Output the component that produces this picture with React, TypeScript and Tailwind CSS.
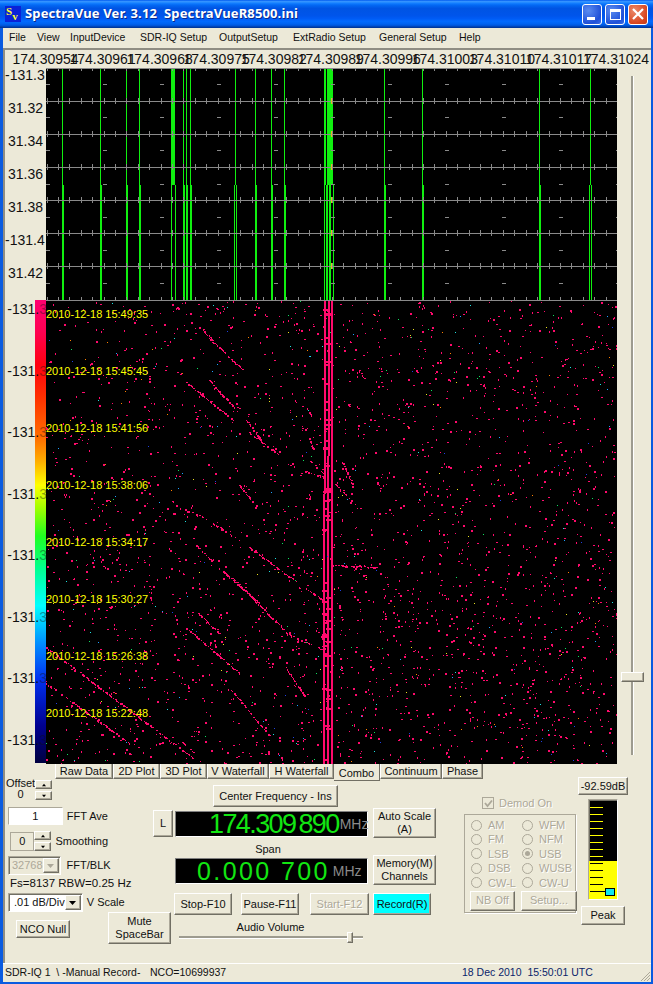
import React from "react";

// seeded random so the waterfall stays the same on each load
function makeRandom(seed: number) {
  let a = seed;
  return () => {
    a |= 0;
    a = (a + 0x6d2b79f5) | 0;
    let t = Math.imul(a ^ (a >>> 15), 1 | a);
    t = (t + Math.imul(t ^ (t >>> 7), 61 | t)) ^ t;
    return ((t ^ (t >>> 14)) >>> 0) / 4294967296;
  };
}

const bevel =
  "border border-t-white border-l-white border-b-[#716f64] border-r-[#716f64] shadow-[inset_-1px_-1px_0_#aca899] bg-[#ece9d8]";
const sunken =
  "border border-t-[#aca899] border-l-[#aca899] border-b-white border-r-white shadow-[inset_1px_1px_0_#716f64]";
const disabledText = "text-[#aca899] [text-shadow:1px_1px_0_#fff]";

const menuItems = [
  { label: "File", w: "w-[28px]" },
  { label: "View", w: "w-[33px]" },
  { label: "InputDevice", w: "w-[70px]" },
  { label: "SDR-IQ Setup", w: "w-[79px]" },
  { label: "OutputSetup", w: "w-[74px]" },
  { label: "ExtRadio Setup", w: "w-[86px]" },
  { label: "General Setup", w: "w-[80px]" },
  { label: "Help", w: "w-[30px]" },
];

const freqLabels = [
  "174.30954", "174.30961", "174.30968", "174.30975", "174.30982", "174.30989",
  "174.30996", "174.31003", "174.31010", "174.31017", "174.31024",
];
const plotLabels = ["-131.3", "31.32", "31.34", "31.36", "31.38", "-131.4", "31.42"];
const stamps = [
  "2010-12-18 15:49:35", "2010-12-18 15:45:45", "2010-12-18 15:41:56", "2010-12-18 15:38:06",
  "2010-12-18 15:34:17", "2010-12-18 15:30:27", "2010-12-18 15:26:38", "2010-12-18 15:22:48",
];

const tabs = [
  { label: "Raw Data", w: "w-[58px]" },
  { label: "2D Plot", w: "w-[47px]" },
  { label: "3D Plot", w: "w-[47px]" },
  { label: "V Waterfall", w: "w-[62px]" },
  { label: "H Waterfall", w: "w-[65px]" },
  { label: "Combo", w: "w-[46px]", active: true },
  { label: "Continuum", w: "w-[62px]" },
  { label: "Phase", w: "w-[41px]" },
];

function Button({ className = "", disabled = false, children }: { className?: string; disabled?: boolean; children: React.ReactNode }) {
  return (
    <div className={`${bevel} flex flex-col items-center justify-center shrink-0 leading-[13px] text-center whitespace-nowrap ${disabled ? disabledText : ""} ${className}`}>
      {children}
    </div>
  );
}

function Tri({ up = false, color = "#000", size = 7 }: { up?: boolean; color?: string; size?: number }) {
  return (
    <svg width={size} height={4} viewBox="0 0 7 4">
      <path d={up ? "M3.5 0 L7 4 L0 4 Z" : "M0 0 L7 0 L3.5 4 Z"} fill={color} />
    </svg>
  );
}

function Spin() {
  return (
    <div className="flex flex-col gap-[2px]">
      <div className={`${bevel} w-[17px] h-[9px] flex items-center justify-center`}><Tri up size={4} /></div>
      <div className={`${bevel} w-[17px] h-[9px] flex items-center justify-center`}><Tri size={4} /></div>
    </div>
  );
}

function TitleBar() {
  return (
    <div className="h-[28px] shrink-0 flex items-center pl-[5px] pr-[5px] bg-[linear-gradient(180deg,#0058ee_0%,#3593ff_5%,#288eff_8%,#127dff_12%,#0369f4_18%,#0054e3_30%,#0055eb_56%,#005bf5_66%,#026afe_76%,#0062ef_86%,#0052d6_92%,#0040ab_96%,#003092_100%)]">
      <div className="w-[16px] h-[16px] bg-[#0a22d8] flex shrink-0 font-['Liberation_Serif',serif] font-bold text-[#ffff30] text-[11px] leading-[11px] pl-[1px]">
        <span>S</span>
        <span className="mt-[5px]">v</span>
      </div>
      <div className="ml-[4px] text-white font-bold text-[13px] tracking-[0.13px] whitespace-pre font-['Noto_Sans',sans-serif] [text-shadow:1px_1px_0_#0a2a8c]">
        SpectraVue Ver. 3.12  SpectraVueR8500.ini
      </div>
      <div className="ml-auto flex gap-[3px]">
        <div className="w-[20px] h-[21px] rounded-[3px] border border-white bg-[radial-gradient(circle_at_30%_30%,#5b8cf0,#1f50d8_70%,#3f6ee6)] flex items-end pl-[4px] pb-[4px]">
          <div className="w-[8px] h-[3px] bg-white" />
        </div>
        <div className="w-[20px] h-[21px] rounded-[3px] border border-white bg-[radial-gradient(circle_at_30%_30%,#5b8cf0,#1f50d8_70%,#3f6ee6)] flex items-center justify-center">
          <div className="w-[11px] h-[11px] border border-white border-t-[3px]" />
        </div>
        <div className="w-[20px] h-[21px] rounded-[3px] border border-white bg-[radial-gradient(circle_at_30%_30%,#eb8a6a,#d8451f_70%,#c23a18)] flex items-center justify-center">
          <svg width="12" height="12" viewBox="0 0 12 12"><path d="M1 1 L11 11 M11 1 L1 11" stroke="#fff" strokeWidth="2.2" /></svg>
        </div>
      </div>
    </div>
  );
}

function MenuBar() {
  return (
    <div className="h-[20px] shrink-0 flex items-center pl-[6px] text-[10.5px]">
      {menuItems.map((m) => (
        <div key={m.label} className={`${m.w} shrink-0 whitespace-nowrap`}>{m.label}</div>
      ))}
    </div>
  );
}

function FreqAxis() {
  return (
    <div className="h-[18px] flex pl-[12px] text-[14px] leading-[18px] text-[#111]">
      {freqLabels.map((f) => (
        <div key={f} className="w-[57.05px] shrink-0 flex justify-center">
          <span className="whitespace-nowrap">{f}</span>
        </div>
      ))}
    </div>
  );
}

// [x, width] pairs for the upper and lower halves of the spectrum traces
const upperTraces = [
  [62, 1], [100, 1], [126, 1], [139, 1], [171, 4], [183, 1], [186, 1], [190, 1], [235, 1],
  [255, 1], [271, 1], [284, 1], [324, 2], [327, 3], [330, 3], [384, 1], [422, 1], [539, 1], [590, 1],
];
const lowerTraces = [
  [62, 2], [100, 2], [126, 2], [139, 2], [171, 1], [175, 1], [183, 2], [186, 2], [190, 2],
  [234, 1], [236, 1], [255, 2], [271, 2], [284, 2], [324, 1], [326, 2], [329, 2], [333, 1],
  [384, 2], [422, 2], [539, 2], [589, 1], [591, 1],
];

function PlotChart() {
  const majors = Array.from({ length: 11 }, (_, i) => 46.5 + i * 57.05);
  const minors = Array.from({ length: 51 }, (_, i) => 46.5 + i * 11.41);
  const rows = [101, 134, 167, 200, 233, 266, 300];
  return (
    <svg width="571" height="233" viewBox="46 68 571 233" shapeRendering="crispEdges" className="block">
      <rect x="46" y="68" width="571" height="233" fill="#000" />
      {upperTraces.map(([x, w]) => <rect key={`u${x}`} x={x} y="68" width={w} height="117" fill="#10f010" />)}
      {lowerTraces.map(([x, w]) => <rect key={`l${x}`} x={x} y="185" width={w} height="115" fill="#10f010" />)}
      {rows.map((y) => <rect key={y} x="46" y={y} width="571" height="1" fill="#8a8a8a" />)}
      <rect x="46" y="68" width="571" height="1" fill="#8a8a8a" />
      {minors.map((x) => (
        <g key={x}>
          <rect x={x} y="68" width="1" height="3" fill="#8a8a8a" />
          {rows.map((y) => <rect key={y} x={x} y={y - 3} width="1" height="6" fill="#8a8a8a" />)}
        </g>
      ))}
      {majors.map((x) =>
        [84, 117, 150, 184, 217, 250, 283].map((y) => (
          <rect key={`${x}-${y}`} x={x - 1} y={y} width="4" height="1" fill="#8a8a8a" />
        ))
      )}
      {rows.slice(0, 6).map((y) => <rect key={`y${y}`} x="331" y={y - 3} width="1" height="6" fill="#e0c020" />)}
    </svg>
  );
}

const streaks = [
  [209, 338, 243, 370], [186, 382, 233, 420], [209, 380, 239, 413], [246, 420, 259, 437],
  [249, 432, 279, 455], [342, 462, 352, 483], [334, 483, 356, 505], [304, 470, 323, 477],
  [309, 412, 312, 417], [309, 460, 323, 473], [239, 485, 253, 502], [179, 507, 203, 517],
  [213, 523, 239, 540], [359, 370, 364, 378], [308, 435, 313, 448], [199, 327, 213, 340],
  [196, 545, 211, 560], [249, 547, 294, 580], [218, 567, 259, 603], [233, 578, 286, 632],
  [286, 633, 323, 650], [306, 588, 323, 600], [189, 630, 239, 673], [198, 613, 219, 633],
  [286, 668, 304, 695], [231, 690, 269, 735], [46, 647, 193, 758], [46, 683, 129, 743],
  [183, 742, 193, 752], [333, 565, 376, 567], [339, 605, 342, 620], [339, 652, 342, 675],
];

function buildWaterfall() {
  const rnd = makeRandom(8137);
  let pink = "";
  const colored: { x: number; y: number; c: string }[] = [];
  const dot = (x: number, y: number, w: number, h: number) => {
    pink += `M${Math.round(x)} ${Math.round(y)}h${w}v${h}h${-w}z`;
  };
  // cells come out 1 or 2px wide, the source picture was scaled
  const cell = () => (rnd() < 0.45 ? 2 : 1);
  for (let i = 0; i < 3500; i++) {
    const x = 46 + rnd() * 571;
    const y = 301 + rnd() * 463;
    const keep = 0.6 + 0.15 * ((x - 46) / 571) + 0.25 * ((y - 301) / 463);
    if (rnd() < keep) dot(x, y, cell(), cell());
  }
  const palette = ["#10e060", "#20e0e0", "#2040e0", "#e8e020", "#ff8000", "#20a0ff"];
  for (let i = 0; i < 300; i++) {
    colored.push({ x: Math.round(46 + rnd() * 571), y: Math.round(301 + rnd() * 463), c: palette[Math.floor(rnd() * palette.length)] });
  }
  for (const [x1, y1, x2, y2] of streaks) {
    const len = Math.hypot(x2 - x1, y2 - y1);
    const steps = Math.floor(len / 1.5);
    for (let i = 0; i <= steps; i++) {
      if (rnd() < 0.72) dot(x1 + ((x2 - x1) * i) / steps, y1 + ((y2 - y1) * i) / steps, cell(), cell());
    }
  }
  // the steady carriers, they drift a pixel or two down the page
  for (let y = 301; y < 764; y++) {
    const t = (y - 301) / 463;
    dot(324 - t * 1.2, y, 2, 1);
    dot(328 - t * 1.5, y, 2, 1);
    dot(331, y, 2, 1);
    if (rnd() < 0.05) dot(322 + rnd() * 3, y, 5, 2);
    if (rnd() < 0.04) dot(326, y, 5, 2);
  }
  return { pink, colored };
}

const waterfall = buildWaterfall();

function WaterfallChart() {
  return (
    <svg width="571" height="463" viewBox="46 301 571 463" shapeRendering="crispEdges" className="block">
      <rect x="46" y="301" width="571" height="463" fill="#000" />
      <path d={waterfall.pink} fill="#ff0a6c" />
      {waterfall.colored.map((d, i) => <rect key={i} x={d.x} y={d.y} width="1" height="1" fill={d.c} />)}
    </svg>
  );
}

function Charts() {
  return (
    <div className="w-[612px] shrink-0 flex flex-col">
      <FreqAxis />
      <div className="h-[233px] flex">
        <div className="w-[41px] shrink-0 text-[14px] pr-[3px] text-right text-[#111] -mt-[9px]">
          {plotLabels.map((p) => (
            <div key={p} className="h-[33px] leading-[33px] whitespace-nowrap">{p}</div>
          ))}
        </div>
        <PlotChart />
      </div>
      <div className="h-[463px] flex">
        <div className="w-[41px] shrink-0 relative">
          <div className="ml-[30px] w-[11px] h-full -mt-[1px] bg-[linear-gradient(180deg,#ff0070_0%,#ff0050_7%,#ff0010_14%,#ff3000_21%,#ff7000_30%,#ffb000_35%,#ffff00_40%,#a0ff00_45%,#20ff20_51%,#00ff90_58%,#00ffff_66%,#0090ff_74%,#0030f0_82%,#000090_92%,#000040_100%)]" />
          <div className="absolute left-0 right-0 top-[-22px] text-[14px] text-[#111]">
            {Array.from({ length: 8 }).map((_, i) => (
              <div key={i} className="h-[61.5px] leading-[61.5px] text-right whitespace-nowrap -mr-[1px]">
                -131.<span className="opacity-40">3</span>
              </div>
            ))}
          </div>
        </div>
        <div className="relative">
          <WaterfallChart />
          <div className="absolute left-0 top-[-15.5px] text-[11px] text-[#ffff00]">
            {stamps.map((s) => (
              <div key={s} className="h-[57px] leading-[57px] whitespace-nowrap">{s}</div>
            ))}
          </div>
        </div>
      </div>
    </div>
  );
}

function VerticalSlider() {
  return (
    <div className="flex-1 relative pt-[26px] h-[714px] flex justify-center">
      <div className="w-[3px] h-[679px] ml-[-3px] bg-[#9d9b8f] border-r border-white" />
      <div className={`${bevel} absolute left-[4px] top-[622px] w-[23px] h-[10px]`} />
    </div>
  );
}

function TabStrip() {
  return (
    <div className="h-[17px] flex ml-[50px] items-start">
      {tabs.map((t) => (
        <div
          key={t.label}
          className={`${t.w} shrink-0 flex items-center justify-center whitespace-nowrap ${
            t.active
              ? "h-[17px] pt-[2px] border-r border-b border-[#716f64]"
              : "h-[15px] border-r border-b border-[#716f64] border-l border-l-white shadow-[inset_-1px_-1px_0_#aca899]"
          }`}
        >
          {t.label}
        </div>
      ))}
    </div>
  );
}

function LeftControls() {
  return (
    <div className="w-[103px] shrink-0 whitespace-nowrap">
      <div className="flex -mt-[4px] ml-[1px] h-[23px]">
        <div className="w-[29px] text-center leading-[12px]">
          <div>Offset</div>
          <div className="mt-[-1px]">0</div>
        </div>
        <div className="mt-[3px]"><Spin /></div>
      </div>
      <div className="flex items-center mt-[7px] ml-[3px]">
        <div className="w-[64px] h-[18px] bg-white border border-t-[#aca899] border-l-[#aca899] border-b-white border-r-white text-center leading-[16px]">1</div>
        <span className="ml-[4px]">FFT Ave</span>
      </div>
      <div className="flex items-center mt-[6px] ml-[5px]">
        <div className="w-[28px] h-[19px] border border-[#aca899] text-center leading-[17px]">0</div>
        <Spin />
        <span className="ml-[4px]">Smoothing</span>
      </div>
      <div className="flex items-center mt-[5px] ml-[3px]">
        <div className={`${sunken} w-[72px] h-[19px] flex items-center pl-[3px] justify-between text-[#aca899]`}>
          32768
          <div className={`${bevel} w-[16px] h-[15px] flex items-center justify-center mr-[1px]`}><Tri color="#aca899" /></div>
        </div>
        <span className="ml-[6px]">FFT/BLK</span>
      </div>
      <div className="ml-[5px] mt-[1px] h-[15px] leading-[15px] text-[11.5px]">Fs=8137 RBW=0.25 Hz</div>
      <div className="flex items-center mt-[2px] ml-[3px]">
        <div className={`${sunken} bg-white w-[77px] h-[19px] flex items-center pl-[5px] justify-between`}>
          <span className="shrink-0">.01 dB/Div</span>
          <div className={`${bevel} w-[16px] h-[15px] shrink-0 flex items-center justify-center mr-[1px]`}><Tri /></div>
        </div>
        <span className="ml-[4px]">V Scale</span>
      </div>
      <Button className="w-[54px] h-[18px] mt-[8px] ml-[11px]">NCO Null</Button>
    </div>
  );
}

function Display({ className = "", children }: { className?: string; children: React.ReactNode }) {
  return (
    <div className={`w-[193px] h-[26px] ml-[1px] bg-black border border-[#808080] border-b-white border-r-white flex items-center ${className}`}>
      {children}
    </div>
  );
}

function CenterControls() {
  return (
    <div className="w-[195px] shrink-0 ml-[1px] flex flex-col">
      <Button className="w-[125px] h-[22px] mt-[4px] ml-[39px]">Center Frequency - Ins</Button>
      <Display className="mt-[4px]">
        <span className="ml-[33px] text-[27px] leading-none text-[#12e612] tracking-[-1.6px] whitespace-pre">174.309</span>
        <span className="ml-[3px] text-[27px] leading-none text-[#12e612] tracking-[-1.6px]">890</span>
        <span className="ml-[1px] text-[#8a8a8a] text-[14px]">MHz</span>
      </Display>
      <div className="h-[21px] leading-[24px] text-center pr-[7px]">Span</div>
      <Display>
        <span className="ml-[21px] text-[25px] leading-none text-[#12e612] tracking-[2.4px] whitespace-pre">0.000 700</span>
        <span className="ml-[3px] text-[#8a8a8a] text-[14px]">MHz</span>
      </Display>
      <div className="flex mt-[9px]">
        <Button className="w-[58px] h-[22px]">Stop-F10</Button>
        <Button className="w-[58px] h-[22px] ml-[9px]">Pause-F11</Button>
        <Button className="w-[59px] h-[22px] ml-[11px]" disabled>Start-F12</Button>
      </div>
      <div className="text-center h-[18px] leading-[24px] pr-[2px]">Audio Volume</div>
      <div className="relative mt-[3px] ml-[5px] w-[184px] h-[3px] bg-[#9d9b8f] border-b border-white">
        <div className={`${bevel} absolute left-[168px] top-[-4px] w-[6px] h-[11px]`} />
      </div>
    </div>
  );
}

function Radio({ label, checked = false }: { label: string; checked?: boolean }) {
  return (
    <div className="flex items-center h-[14.4px]">
      <div className="w-[11px] h-[11px] rounded-full border border-[#aca899] flex items-center justify-center shrink-0">
        {checked && <div className="w-[5px] h-[5px] rounded-full bg-[#aca899]" />}
      </div>
      <span className={`ml-[6px] ${disabledText}`}>{label}</span>
    </div>
  );
}

function DemodControls() {
  return (
    <div className="w-[112px] shrink-0 ml-[28px]">
      <div className="flex items-center mt-[16px] ml-[18px] h-[12px]">
        <div className="w-[12px] h-[12px] border border-[#aca899] bg-[#ece9d8] flex items-center justify-center">
          <svg width="9" height="9" viewBox="0 0 9 9"><path d="M1 4 L3.5 7 L8 1.5" stroke="#aca899" strokeWidth="1.8" fill="none" /></svg>
        </div>
        <span className={`ml-[5px] ${disabledText}`}>Demod On</span>
      </div>
      <div className="mt-[5px] w-[112px] h-[99px] border border-[#aca899] shadow-[1px_1px_0_#fff] pt-[3px] pl-[5px] pr-[1px]">
        <div className="grid grid-cols-[51px_1fr] ml-[1px]">
          <Radio label="AM" /><Radio label="WFM" />
          <Radio label="FM" /><Radio label="NFM" />
          <Radio label="LSB" /><Radio label="USB" checked />
          <Radio label="DSB" /><Radio label="WUSB" />
          <Radio label="CW-L" /><Radio label="CW-U" />
        </div>
        <div className="flex mt-[1px]">
          <Button className="w-[45px] h-[20px]" disabled>NB Off</Button>
          <Button className="w-[56px] h-[20px] ml-[6px]" disabled>Setup...</Button>
        </div>
      </div>
    </div>
  );
}

function Meter() {
  const yellowTicks = [807, 814, 821, 828, 835, 842, 849, 856];
  const blackTicks = [863, 870, 877, 884, 891];
  return (
    <div className={`${sunken} w-[30px] h-[101px] ml-[10px] mt-[4px] bg-black`}>
      <svg width="28" height="99" viewBox="589 800 28 99" shapeRendering="crispEdges" className="block">
        <rect x="589" y="861" width="28" height="38" fill="#ffff00" />
        {yellowTicks.map((y) => <rect key={y} x="590" y={y} width="13" height="1" fill="#ffff00" />)}
        {blackTicks.map((y) => <rect key={y} x="590" y={y} width="13" height="1" fill="#000" />)}
        <rect x="603" y="891" width="3" height="1" fill="#000" />
        <rect x="605.5" y="888.5" width="9" height="7" fill="#10e8f0" stroke="#000" />
      </svg>
    </div>
  );
}

function StatusBar() {
  return (
    <div className="h-[19px] shrink-0 border-t border-white flex items-center relative whitespace-pre pl-[2px] text-[10.5px]">
      <span className="w-[145px] shrink-0">SDR-IQ 1  \ -Manual Record-</span>
      <span className="w-[312px] shrink-0">NCO=10699937</span>
      <span className="text-[#0a246a]">18 Dec 2010  15:50:01 UTC</span>
      <svg width="12" height="12" viewBox="0 0 12 12" className="absolute right-0 bottom-0">
        <path d="M11 2 L2 11 M11 5 L5 11 M11 8 L8 11" stroke="#aca899" strokeWidth="1" />
      </svg>
    </div>
  );
}

export default function App() {
  return (
    <div className="w-[653px] h-[984px] bg-[#0a5be0] flex flex-col overflow-hidden font-['Liberation_Sans',sans-serif] text-[11px] text-[#111]">
      <TitleBar />
      <div className="flex-1 ml-[3px] mr-[2px] mb-[2px] bg-[#ece9d8] flex flex-col min-h-0">
        <MenuBar />
        <div className="flex-1 border-t-2 border-l-2 border-[#8f8d83] flex flex-col min-h-0">
          <div className="h-[714px] flex shrink-0">
            <Charts />
            <VerticalSlider />
          </div>
          <div className="h-[199px] flex shrink-0">
            <div className="w-[573px] shrink-0">
              <TabStrip />
              <div className="flex">
                <LeftControls />
                <div className="w-[65px] shrink-0 flex flex-col">
                  <Button className="w-[20px] h-[27px] mt-[29px] ml-[45px]">L</Button>
                  <Button className="w-[63px] h-[32px] mt-[75px]">Mute<br />SpaceBar</Button>
                </div>
                <CenterControls />
                <div className="w-[63px] ml-[4px] shrink-0 flex flex-col">
                  <Button className="w-[63px] h-[30px] mt-[27px]">Auto Scale<br />(A)</Button>
                  <Button className="w-[63px] h-[30px] mt-[17px]">Memory(M)<br />Channels</Button>
                  <Button className="w-[58px] h-[22px] mt-[8px] !bg-[#00ffff]">Record(R)</Button>
                </div>
                <DemodControls />
              </div>
            </div>
            <div className="flex-1 pt-[13px]">
              <Button className="w-[50px] h-[18px]">-92.59dB</Button>
              <Meter />
              <Button className="w-[44px] h-[19px] mt-[6px] ml-[3px]">Peak</Button>
            </div>
          </div>
        </div>
        <StatusBar />
      </div>
    </div>
  );
}
